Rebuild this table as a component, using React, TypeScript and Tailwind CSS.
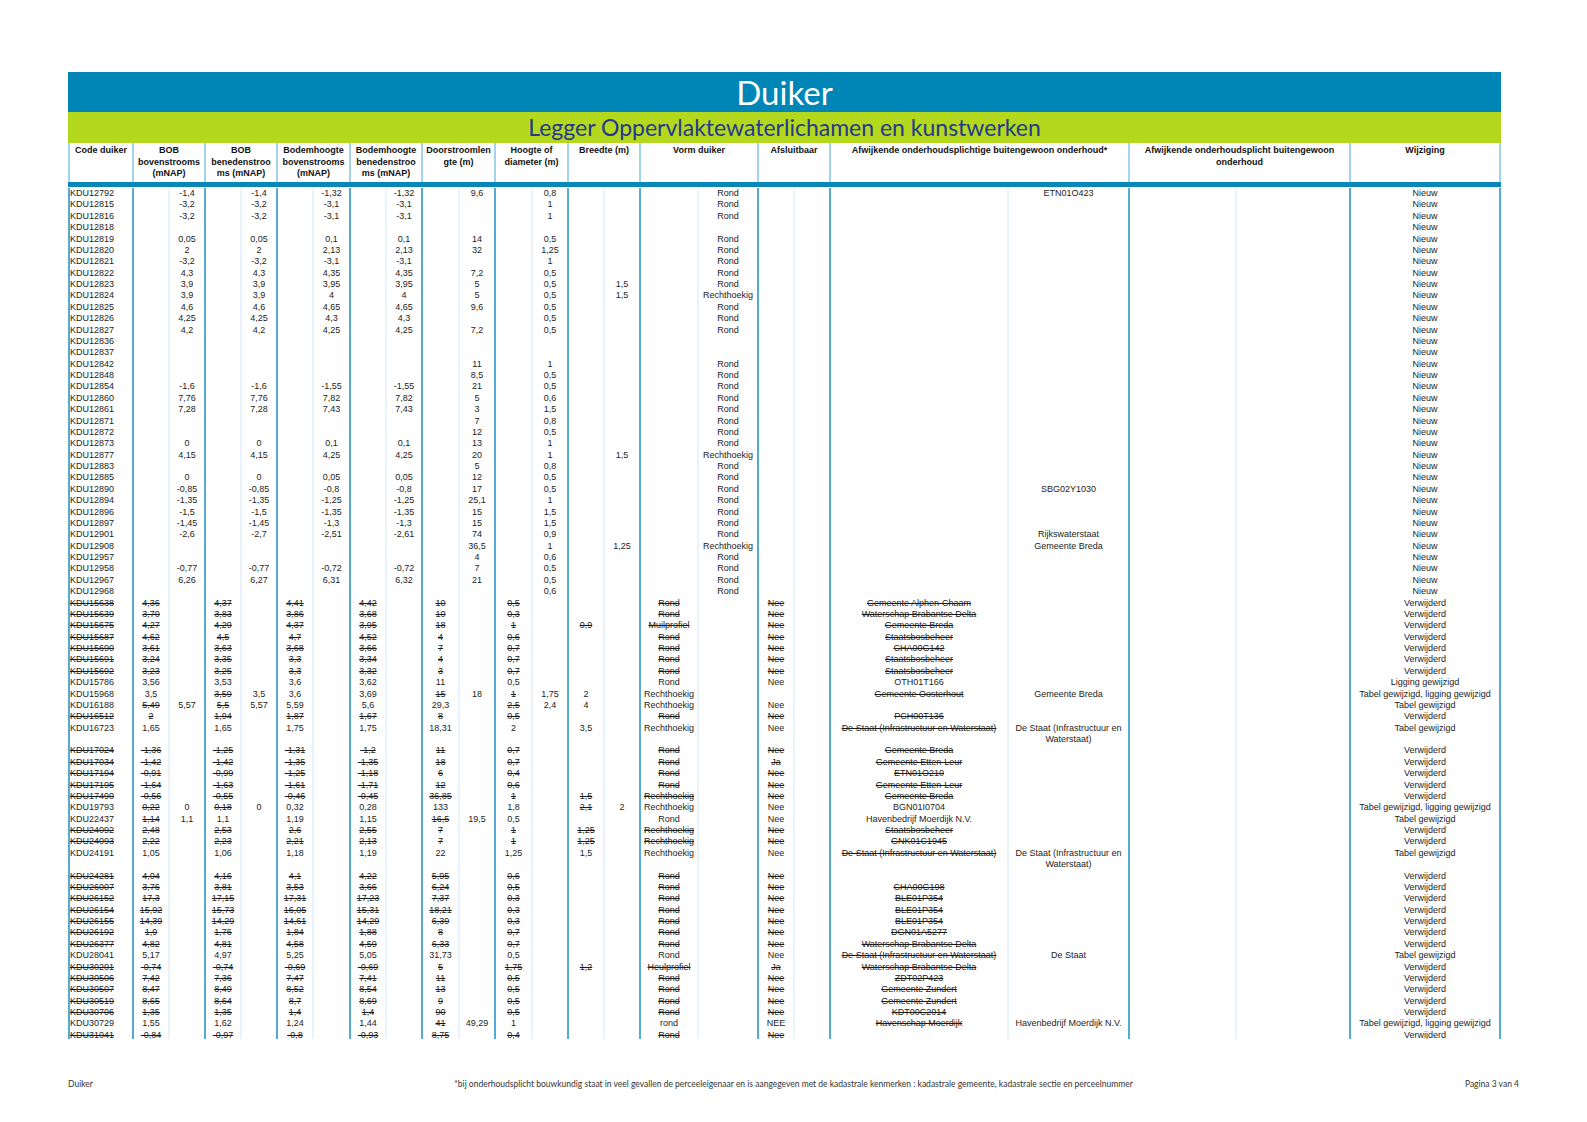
type Pair = string | [string, string];

// kolommen: code | 11 paren (sub-kolommen) | wijziging
function mk(code: string, pairs: Pair[], wijz: string): string[] {
  const cells = [code];
  for (const p of pairs) {
    if (typeof p === "string") cells.push(p, "");
    else cells.push(p[0], p[1]);
  }
  cells.push(wijz);
  return cells;
}

function nieuw(code: string, ...v: string[]): string[] {
  const [bb, be, db, de, door, hoog, breed, vorm, afw] = v;
  return mk(
    code,
    [
      ["", bb],
      ["", be],
      ["", db],
      ["", de],
      ["", door],
      ["", hoog],
      ["", breed],
      ["", vorm],
      "",
      ["", afw],
      "",
    ],
    "Nieuw"
  );
}

function del(code: string, ...v: string[]): string[] {
  const s = (x: string) => (x ? "~" + x : "");
  return mk("~" + code, [...v.map(s), ""], "Verwijderd");
}

const DE_STAAT = "De Staat (Infrastructuur en Waterstaat)";
const DE_STAAT_WRAP = "De Staat (Infrastructuur en\nWaterstaat)";

const rows: string[][] = [
  nieuw("KDU12792", "-1,4", "-1,4", "-1,32", "-1,32", "9,6", "0,8", "", "Rond", "ETN01O423"),
  nieuw("KDU12815", "-3,2", "-3,2", "-3,1", "-3,1", "", "1", "", "Rond", ""),
  nieuw("KDU12816", "-3,2", "-3,2", "-3,1", "-3,1", "", "1", "", "Rond", ""),
  nieuw("KDU12818", "", "", "", "", "", "", "", "", ""),
  nieuw("KDU12819", "0,05", "0,05", "0,1", "0,1", "14", "0,5", "", "Rond", ""),
  nieuw("KDU12820", "2", "2", "2,13", "2,13", "32", "1,25", "", "Rond", ""),
  nieuw("KDU12821", "-3,2", "-3,2", "-3,1", "-3,1", "", "1", "", "Rond", ""),
  nieuw("KDU12822", "4,3", "4,3", "4,35", "4,35", "7,2", "0,5", "", "Rond", ""),
  nieuw("KDU12823", "3,9", "3,9", "3,95", "3,95", "5", "0,5", "1,5", "Rond", ""),
  nieuw("KDU12824", "3,9", "3,9", "4", "4", "5", "0,5", "1,5", "Rechthoekig", ""),
  nieuw("KDU12825", "4,6", "4,6", "4,65", "4,65", "9,6", "0,5", "", "Rond", ""),
  nieuw("KDU12826", "4,25", "4,25", "4,3", "4,3", "", "0,5", "", "Rond", ""),
  nieuw("KDU12827", "4,2", "4,2", "4,25", "4,25", "7,2", "0,5", "", "Rond", ""),
  nieuw("KDU12836", "", "", "", "", "", "", "", "", ""),
  nieuw("KDU12837", "", "", "", "", "", "", "", "", ""),
  nieuw("KDU12842", "", "", "", "", "11", "1", "", "Rond", ""),
  nieuw("KDU12848", "", "", "", "", "8,5", "0,5", "", "Rond", ""),
  nieuw("KDU12854", "-1,6", "-1,6", "-1,55", "-1,55", "21", "0,5", "", "Rond", ""),
  nieuw("KDU12860", "7,76", "7,76", "7,82", "7,82", "5", "0,6", "", "Rond", ""),
  nieuw("KDU12861", "7,28", "7,28", "7,43", "7,43", "3", "1,5", "", "Rond", ""),
  nieuw("KDU12871", "", "", "", "", "7", "0,8", "", "Rond", ""),
  nieuw("KDU12872", "", "", "", "", "12", "0,5", "", "Rond", ""),
  nieuw("KDU12873", "0", "0", "0,1", "0,1", "13", "1", "", "Rond", ""),
  nieuw("KDU12877", "4,15", "4,15", "4,25", "4,25", "20", "1", "1,5", "Rechthoekig", ""),
  nieuw("KDU12883", "", "", "", "", "5", "0,8", "", "Rond", ""),
  nieuw("KDU12885", "0", "0", "0,05", "0,05", "12", "0,5", "", "Rond", ""),
  nieuw("KDU12890", "-0,85", "-0,85", "-0,8", "-0,8", "17", "0,5", "", "Rond", "SBG02Y1030"),
  nieuw("KDU12894", "-1,35", "-1,35", "-1,25", "-1,25", "25,1", "1", "", "Rond", ""),
  nieuw("KDU12896", "-1,5", "-1,5", "-1,35", "-1,35", "15", "1,5", "", "Rond", ""),
  nieuw("KDU12897", "-1,45", "-1,45", "-1,3", "-1,3", "15", "1,5", "", "Rond", ""),
  nieuw("KDU12901", "-2,6", "-2,7", "-2,51", "-2,61", "74", "0,9", "", "Rond", "Rijkswaterstaat"),
  nieuw("KDU12908", "", "", "", "", "36,5", "1", "1,25", "Rechthoekig", "Gemeente Breda"),
  nieuw("KDU12957", "", "", "", "", "4", "0,6", "", "Rond", ""),
  nieuw("KDU12958", "-0,77", "-0,77", "-0,72", "-0,72", "7", "0,5", "", "Rond", ""),
  nieuw("KDU12967", "6,26", "6,27", "6,31", "6,32", "21", "0,5", "", "Rond", ""),
  nieuw("KDU12968", "", "", "", "", "", "0,6", "", "Rond", ""),

  del("KDU15638", "4,36", "4,37", "4,41", "4,42", "10", "0,5", "", "Rond", "Nee", "Gemeente Alphen-Chaam"),
  del("KDU15639", "3,70", "3,83", "3,86", "3,68", "10", "0,3", "", "Rond", "Nee", "Waterschap Brabantse Delta"),
  del("KDU15675", "4,27", "4,29", "4,37", "3,95", "18", "1", "0,9", "Muilprofiel", "Nee", "Gemeente Breda"),
  del("KDU15687", "4,62", "4,5", "4,7", "4,52", "4", "0,6", "", "Rond", "Nee", "Staatsbosbeheer"),
  del("KDU15690", "3,61", "3,63", "3,68", "3,66", "7", "0,7", "", "Rond", "Nee", "CHA00G142"),
  del("KDU15691", "3,24", "3,35", "3,3", "3,34", "4", "0,7", "", "Rond", "Nee", "Staatsbosbeheer"),
  del("KDU15692", "3,23", "3,25", "3,3", "3,32", "3", "0,7", "", "Rond", "Nee", "Staatsbosbeheer"),
  mk("KDU15786", ["3,56", "3,53", "3,6", "3,62", "11", "0,5", "", "Rond", "Nee", "OTH01T166", ""], "Ligging gewijzigd"),
  mk(
    "KDU15968",
    ["3,5", ["~3,59", "3,5"], "3,6", "3,69", ["~15", "18"], ["~1", "1,75"], "2", "Rechthoekig", "", ["~Gemeente Oosterhout", "Gemeente Breda"], ""],
    "Tabel gewijzigd, ligging gewijzigd"
  ),
  mk(
    "KDU16188",
    [["~5,49", "5,57"], ["~5,5", "5,57"], "5,59", "5,6", "29,3", ["~2,5", "2,4"], "4", "Rechthoekig", "Nee", "", ""],
    "Tabel gewijzigd"
  ),
  del("KDU16512", "2", "1,94", "1,87", "1,67", "8", "0,5", "", "Rond", "Nee", "PCH00T136"),
  mk(
    "KDU16723",
    ["1,65", "1,65", "1,75", "1,75", "18,31", "2", "3,5", "Rechthoekig", "Nee", ["~" + DE_STAAT, DE_STAAT_WRAP], ""],
    "Tabel gewijzigd"
  ),
  del("KDU17024", "-1,36", "-1,25", "-1,31", "-1,2", "11", "0,7", "", "Rond", "Nee", "Gemeente Breda"),
  del("KDU17034", "-1,42", "-1,42", "-1,35", "-1,35", "18", "0,7", "", "Rond", "Ja", "Gemeente Etten-Leur"),
  del("KDU17194", "-0,91", "-0,99", "-1,25", "-1,18", "6", "0,4", "", "Rond", "Nee", "ETN01O210"),
  del("KDU17195", "-1,64", "-1,63", "-1,61", "-1,71", "12", "0,6", "", "Rond", "Nee", "Gemeente Etten-Leur"),
  del("KDU17490", "-0,56", "-0,55", "-0,46", "-0,45", "36,85", "1", "1,5", "Rechthoekig", "Nee", "Gemeente Breda"),
  mk(
    "KDU19793",
    [["~0,22", "0"], ["~0,18", "0"], "0,32", "0,28", "133", "1,8", ["~2,1", "2"], "Rechthoekig", "Nee", "BGN01I0704", ""],
    "Tabel gewijzigd, ligging gewijzigd"
  ),
  mk(
    "KDU22437",
    [["~1,14", "1,1"], "1,1", "1,19", "1,15", ["~16,5", "19,5"], "0,5", "", "Rond", "Nee", "Havenbedrijf Moerdijk N.V.", ""],
    "Tabel gewijzigd"
  ),
  del("KDU24092", "2,48", "2,53", "2,6", "2,55", "7", "1", "1,25", "Rechthoekig", "Nee", "Staatsbosbeheer"),
  del("KDU24093", "2,22", "2,23", "2,21", "2,13", "7", "1", "1,25", "Rechthoekig", "Nee", "GNK01C1945"),
  mk(
    "KDU24191",
    ["1,05", "1,06", "1,18", "1,19", "22", "1,25", "1,5", "Rechthoekig", "Nee", ["~" + DE_STAAT, DE_STAAT_WRAP], ""],
    "Tabel gewijzigd"
  ),
  del("KDU24281", "4,04", "4,16", "4,1", "4,22", "5,95", "0,6", "", "Rond", "Nee", ""),
  del("KDU26007", "3,76", "3,81", "3,53", "3,66", "6,24", "0,5", "", "Rond", "Nee", "CHA00G198"),
  del("KDU26152", "17,3", "17,15", "17,31", "17,23", "7,37", "0,3", "", "Rond", "Nee", "BLE01P354"),
  del("KDU26154", "15,92", "15,73", "16,05", "15,31", "18,21", "0,3", "", "Rond", "Nee", "BLE01P354"),
  del("KDU26155", "14,39", "14,29", "14,61", "14,29", "6,39", "0,3", "", "Rond", "Nee", "BLE01P354"),
  del("KDU26192", "1,9", "1,76", "1,84", "1,88", "8", "0,7", "", "Rond", "Nee", "DGN01A5277"),
  del("KDU26377", "4,82", "4,81", "4,58", "4,59", "6,33", "0,7", "", "Rond", "Nee", "Waterschap Brabantse Delta"),
  mk(
    "KDU28041",
    ["5,17", "4,97", "5,25", "5,05", "31,73", "0,5", "", "Rond", "Nee", ["~" + DE_STAAT, "De Staat"], ""],
    "Tabel gewijzigd"
  ),
  del("KDU30201", "-0,74", "-0,74", "-0,69", "-0,69", "5", "1,75", "1,2", "Heulprofiel", "Ja", "Waterschap Brabantse Delta"),
  del("KDU30506", "7,42", "7,36", "7,47", "7,41", "11", "0,5", "", "Rond", "Nee", "ZDT02P423"),
  del("KDU30507", "8,47", "8,49", "8,52", "8,54", "13", "0,5", "", "Rond", "Nee", "Gemeente Zundert"),
  del("KDU30519", "8,65", "8,64", "8,7", "8,69", "9", "0,5", "", "Rond", "Nee", "Gemeente Zundert"),
  del("KDU30706", "1,35", "1,35", "1,4", "1,4", "90", "0,5", "", "Rond", "Nee", "KDT00C2014"),
  mk(
    "KDU30729",
    ["1,55", "1,62", "1,24", "1,44", ["~41", "49,29"], "1", "", "rond", "NEE", ["~Havenschap Moerdijk", "Havenbedrijf Moerdijk N.V."], ""],
    "Tabel gewijzigd, ligging gewijzigd"
  ),
  del("KDU31041", "-0,84", "-0,97", "-0,8", "-0,93", "8,75", "0,4", "", "Rond", "Nee", ""),
];

const headers = [
  "Code duiker",
  "BOB\nbovenstrooms\n(mNAP)",
  "BOB\nbenedenstroo\nms (mNAP)",
  "Bodemhoogte\nbovenstrooms\n(mNAP)",
  "Bodemhoogte\nbenedenstroo\nms (mNAP)",
  "Doorstroomlen\ngte (m)",
  "Hoogte of\ndiameter (m)",
  "Breedte (m)",
  "Vorm duiker",
  "Afsluitbaar",
  "Afwijkende onderhoudsplichtige buitengewoon onderhoud*",
  "Afwijkende onderhoudsplicht buitengewoon\nonderhoud",
  "Wijziging",
];

function BodyCell({ v, i }: { v: string; i: number }) {
  const struck = v.startsWith("~");
  const text = struck ? v.slice(1) : v;
  const major = i === 0 || i === 23 || i % 2 === 1;
  return (
    <div
      className={`whitespace-pre-line border-l-2 ${major ? "border-[#55abd6]" : "border-[#e9f3fb]"} ${
        i === 23 ? "border-r-2 border-r-[#55abd6]" : ""
      } ${i === 0 ? "text-left" : "text-center"}`}
    >
      <span className={struck ? "line-through" : ""}>{text}</span>
    </div>
  );
}

export default function App() {
  return (
    <div className="min-h-[1122px] w-[1587px] bg-white pt-[72px] font-['Liberation_Sans',Arial,sans-serif] text-[#1c1c1c]">
      <div className="ml-[68px] w-[1433px]">
        {/* titelbalken */}
        <div className="flex h-[40px] items-center justify-center bg-[#0086b6]">
          <span className="font-['Lato',sans-serif] text-[33px] leading-none text-white">Duiker</span>
        </div>
        <div className="flex h-[31px] items-center justify-center bg-[#b4d81e]">
          <span className="font-['Lato',sans-serif] text-[23px] leading-none text-[#24388f]">
            Legger Oppervlaktewaterlichamen en kunstwerken
          </span>
        </div>

        {/* kolomkoppen */}
        <div className="grid h-[39px] grid-cols-[64px_72px_72px_73px_72px_73px_73px_72px_118px_72px_299px_221px_152px] text-[9px] font-bold leading-[11.7px] text-[#111]">
          {headers.map((h, i) => (
            <div
              key={i}
              className={`whitespace-pre-line border-l-2 border-[#a3d4eb] pt-[2px] text-center ${
                i === headers.length - 1 ? "border-r-2 border-r-[#a3d4eb]" : ""
              }`}
            >
              {h}
            </div>
          ))}
        </div>
        <div className="h-[5px] bg-[#0a87b9]" />

        {/* regels */}
        <div className="h-[852px] overflow-hidden pt-[1px] text-[9px] leading-[11.38px]">
          {rows.map((r, ri) => (
            <div
              key={ri}
              className="grid grid-cols-[64px_36px_36px_36px_36px_36px_37px_36px_36px_37px_36px_37px_36px_36px_36px_58px_60px_36px_36px_178px_121px_107px_114px_152px]"
            >
              {r.map((v, i) => (
                <BodyCell key={i} v={v} i={i} />
              ))}
            </div>
          ))}
        </div>
      </div>

      {/* voettekst */}
      <div className="mt-[39px] ml-[68px] grid w-[1451px] grid-cols-[1fr_auto_1fr] font-['Lato',sans-serif] text-[8.5px] leading-[12px] text-[#333]">
        <span>Duiker</span>
        <span>
          *bij onderhoudsplicht bouwkundig staat in veel gevallen de perceeleigenaar en is aangegeven met de kadastrale
          kenmerken : kadastrale gemeente, kadastrale sectie en perceelnummer
        </span>
        <span className="text-right">Pagina 3 van 4</span>
      </div>
    </div>
  );
}
